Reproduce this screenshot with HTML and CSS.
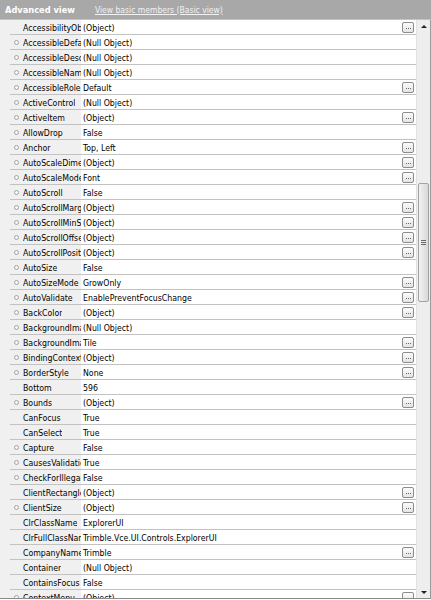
FILE: index.html
```html
<!DOCTYPE html>
<html>
<head>
<meta charset="utf-8">
<link rel="stylesheet" href="styles.css">
</head>
<body>
<div class="panel">
  <div class="header">
    <span class="title">Advanced view</span>
    <span class="link">View basic members (Basic view)</span>
  </div>
  <div class="main">
    <div class="grid">
      <div class="row"><div class="gutter"></div><div class="cells"><div class="name"><span class="mark"></span><span class="ntext">AccessibilityObject</span></div><div class="value"><span class="vtext">(Object)</span><span class="btn"></span></div></div></div>
      <div class="row"><div class="gutter"></div><div class="cells"><div class="name"><span class="mark"><i class="dot"></i></span><span class="ntext">AccessibleDefaultActionDescription</span></div><div class="value"><span class="vtext">(Null Object)</span></div></div></div>
      <div class="row"><div class="gutter"></div><div class="cells"><div class="name"><span class="mark"><i class="dot"></i></span><span class="ntext">AccessibleDescription</span></div><div class="value"><span class="vtext">(Null Object)</span></div></div></div>
      <div class="row"><div class="gutter"></div><div class="cells"><div class="name"><span class="mark"><i class="dot"></i></span><span class="ntext">AccessibleName</span></div><div class="value"><span class="vtext">(Null Object)</span></div></div></div>
      <div class="row"><div class="gutter"></div><div class="cells"><div class="name"><span class="mark"><i class="dot"></i></span><span class="ntext">AccessibleRole</span></div><div class="value"><span class="vtext">Default</span><span class="btn"></span></div></div></div>
      <div class="row"><div class="gutter"></div><div class="cells"><div class="name"><span class="mark"><i class="dot"></i></span><span class="ntext">ActiveControl</span></div><div class="value"><span class="vtext">(Null Object)</span></div></div></div>
      <div class="row"><div class="gutter"></div><div class="cells"><div class="name"><span class="mark"><i class="dot"></i></span><span class="ntext">ActiveItem</span></div><div class="value"><span class="vtext">(Object)</span><span class="btn"></span></div></div></div>
      <div class="row"><div class="gutter"></div><div class="cells"><div class="name"><span class="mark"><i class="dot"></i></span><span class="ntext">AllowDrop</span></div><div class="value"><span class="vtext">False</span></div></div></div>
      <div class="row"><div class="gutter"></div><div class="cells"><div class="name"><span class="mark"><i class="dot"></i></span><span class="ntext">Anchor</span></div><div class="value"><span class="vtext">Top, Left</span><span class="btn"></span></div></div></div>
      <div class="row"><div class="gutter"></div><div class="cells"><div class="name"><span class="mark"><i class="dot"></i></span><span class="ntext">AutoScaleDimensions</span></div><div class="value"><span class="vtext">(Object)</span><span class="btn"></span></div></div></div>
      <div class="row"><div class="gutter"></div><div class="cells"><div class="name"><span class="mark"><i class="dot"></i></span><span class="ntext">AutoScaleMode</span></div><div class="value"><span class="vtext">Font</span><span class="btn"></span></div></div></div>
      <div class="row"><div class="gutter"></div><div class="cells"><div class="name"><span class="mark"><i class="dot"></i></span><span class="ntext">AutoScroll</span></div><div class="value"><span class="vtext">False</span></div></div></div>
      <div class="row"><div class="gutter"></div><div class="cells"><div class="name"><span class="mark"><i class="dot"></i></span><span class="ntext">AutoScrollMargin</span></div><div class="value"><span class="vtext">(Object)</span><span class="btn"></span></div></div></div>
      <div class="row"><div class="gutter"></div><div class="cells"><div class="name"><span class="mark"><i class="dot"></i></span><span class="ntext">AutoScrollMinSize</span></div><div class="value"><span class="vtext">(Object)</span><span class="btn"></span></div></div></div>
      <div class="row"><div class="gutter"></div><div class="cells"><div class="name"><span class="mark"><i class="dot"></i></span><span class="ntext">AutoScrollOffset</span></div><div class="value"><span class="vtext">(Object)</span><span class="btn"></span></div></div></div>
      <div class="row"><div class="gutter"></div><div class="cells"><div class="name"><span class="mark"><i class="dot"></i></span><span class="ntext">AutoScrollPosition</span></div><div class="value"><span class="vtext">(Object)</span><span class="btn"></span></div></div></div>
      <div class="row"><div class="gutter"></div><div class="cells"><div class="name"><span class="mark"><i class="dot"></i></span><span class="ntext">AutoSize</span></div><div class="value"><span class="vtext">False</span></div></div></div>
      <div class="row"><div class="gutter"></div><div class="cells"><div class="name"><span class="mark"><i class="dot"></i></span><span class="ntext">AutoSizeMode</span></div><div class="value"><span class="vtext">GrowOnly</span><span class="btn"></span></div></div></div>
      <div class="row"><div class="gutter"></div><div class="cells"><div class="name"><span class="mark"><i class="dot"></i></span><span class="ntext">AutoValidate</span></div><div class="value"><span class="vtext">EnablePreventFocusChange</span><span class="btn"></span></div></div></div>
      <div class="row"><div class="gutter"></div><div class="cells"><div class="name"><span class="mark"><i class="dot"></i></span><span class="ntext">BackColor</span></div><div class="value"><span class="vtext">(Object)</span><span class="btn"></span></div></div></div>
      <div class="row"><div class="gutter"></div><div class="cells"><div class="name"><span class="mark"><i class="dot"></i></span><span class="ntext">BackgroundImage</span></div><div class="value"><span class="vtext">(Null Object)</span></div></div></div>
      <div class="row"><div class="gutter"></div><div class="cells"><div class="name"><span class="mark"><i class="dot"></i></span><span class="ntext">BackgroundImageLayout</span></div><div class="value"><span class="vtext">Tile</span><span class="btn"></span></div></div></div>
      <div class="row"><div class="gutter"></div><div class="cells"><div class="name"><span class="mark"><i class="dot"></i></span><span class="ntext">BindingContext</span></div><div class="value"><span class="vtext">(Object)</span><span class="btn"></span></div></div></div>
      <div class="row"><div class="gutter"></div><div class="cells"><div class="name"><span class="mark"><i class="dot"></i></span><span class="ntext">BorderStyle</span></div><div class="value"><span class="vtext">None</span><span class="btn"></span></div></div></div>
      <div class="row"><div class="gutter"></div><div class="cells"><div class="name"><span class="mark"></span><span class="ntext">Bottom</span></div><div class="value"><span class="vtext">596</span></div></div></div>
      <div class="row"><div class="gutter"></div><div class="cells"><div class="name"><span class="mark"><i class="dot"></i></span><span class="ntext">Bounds</span></div><div class="value"><span class="vtext">(Object)</span><span class="btn"></span></div></div></div>
      <div class="row"><div class="gutter"></div><div class="cells"><div class="name"><span class="mark"></span><span class="ntext">CanFocus</span></div><div class="value"><span class="vtext">True</span></div></div></div>
      <div class="row"><div class="gutter"></div><div class="cells"><div class="name"><span class="mark"></span><span class="ntext">CanSelect</span></div><div class="value"><span class="vtext">True</span></div></div></div>
      <div class="row"><div class="gutter"></div><div class="cells"><div class="name"><span class="mark"><i class="dot"></i></span><span class="ntext">Capture</span></div><div class="value"><span class="vtext">False</span></div></div></div>
      <div class="row"><div class="gutter"></div><div class="cells"><div class="name"><span class="mark"><i class="dot"></i></span><span class="ntext">CausesValidation</span></div><div class="value"><span class="vtext">True</span></div></div></div>
      <div class="row"><div class="gutter"></div><div class="cells"><div class="name"><span class="mark"><i class="dot"></i></span><span class="ntext">CheckForIllegalCrossThreadCalls</span></div><div class="value"><span class="vtext">False</span></div></div></div>
      <div class="row"><div class="gutter"></div><div class="cells"><div class="name"><span class="mark"></span><span class="ntext">ClientRectangle</span></div><div class="value"><span class="vtext">(Object)</span><span class="btn"></span></div></div></div>
      <div class="row"><div class="gutter"></div><div class="cells"><div class="name"><span class="mark"><i class="dot"></i></span><span class="ntext">ClientSize</span></div><div class="value"><span class="vtext">(Object)</span><span class="btn"></span></div></div></div>
      <div class="row"><div class="gutter"></div><div class="cells"><div class="name"><span class="mark"></span><span class="ntext">ClrClassName</span></div><div class="value"><span class="vtext">ExplorerUI</span></div></div></div>
      <div class="row"><div class="gutter"></div><div class="cells"><div class="name"><span class="mark"></span><span class="ntext">ClrFullClassName</span></div><div class="value"><span class="vtext">Trimble.Vce.UI.Controls.ExplorerUI</span></div></div></div>
      <div class="row"><div class="gutter"></div><div class="cells"><div class="name"><span class="mark"></span><span class="ntext">CompanyName</span></div><div class="value"><span class="vtext">Trimble</span><span class="btn"></span></div></div></div>
      <div class="row"><div class="gutter"></div><div class="cells"><div class="name"><span class="mark"></span><span class="ntext">Container</span></div><div class="value"><span class="vtext">(Null Object)</span></div></div></div>
      <div class="row"><div class="gutter"></div><div class="cells"><div class="name"><span class="mark"></span><span class="ntext">ContainsFocus</span></div><div class="value"><span class="vtext">False</span></div></div></div>
      <div class="row"><div class="gutter"></div><div class="cells"><div class="name"><span class="mark"><i class="dot"></i></span><span class="ntext">ContextMenu</span></div><div class="value"><span class="vtext">(Object)</span><span class="btn"></span></div></div></div>
    </div>
    <div class="scrollbar">
      <div class="arrow up"></div>
      <div class="track">
        <div class="thumb"><span class="grip"></span></div>
      </div>
      <div class="arrow down"></div>
    </div>
  </div>
</div>
</body>
</html>
```
FILE: styles.css
```css
html, body {
  margin: 0;
  padding: 0;
  background: #ffffff;
}
body {
  width: 431px;
  height: 600px;
  overflow: hidden;
  font-family: "DejaVu Sans Condensed", "Liberation Sans", sans-serif;
  font-size: 8.7px;
  color: #000000;
}
.panel {
  display: flex;
  flex-direction: column;
  height: 600px;
}
.header {
  height: 19px;
  flex: 0 0 19px;
  background: #a8a8a8;
  border-bottom: 1px solid #c4c4c4;
  display: flex;
  align-items: center;
  padding-left: 5px;
  gap: 20px;
}
.title {
  font-weight: bold;
  font-size: 9.2px;
  color: #ffffff;
}
.link {
  color: #f2f2f2;
  text-decoration: underline;
  font-size: 8.5px;
}
.main {
  flex: 0 0 579px;
  height: 579px;
  display: flex;
  border-bottom: 1px solid #8a8a8a;
  border-right: 1px solid #9a9a9a;
  box-sizing: border-box;
  overflow: hidden;
}
.grid {
  flex: 1;
  overflow: hidden;
  background: #f0f0f0;
}
.row {
  display: flex;
  height: 15px;
}
.gutter {
  width: 10px;
  flex: 0 0 10px;
  background: #f0f0f0;
}
.cells {
  flex: 1;
  display: flex;
  border-bottom: 1px solid #c2c2c2;
  height: 15px;
  box-sizing: border-box;
  padding-top: 1px;
}
.name {
  width: 71px;
  flex: 0 0 71px;
  display: flex;
  align-items: center;
  overflow: hidden;
  background: #f0f0f0;
  white-space: nowrap;
}
.mark {
  width: 13px;
  flex: 0 0 13px;
  display: flex;
  align-items: center;
  justify-content: center;
}
.dot {
  display: block;
  width: 3px;
  height: 3px;
  border: 1px solid #a3a3a3;
  border-radius: 50%;
  background: #f8f8f8;
}
.ntext {
  overflow: hidden;
  min-width: 0;
}
.value {
  flex: 1;
  display: flex;
  align-items: center;
  background: #ffffff;
  padding-left: 2px;
  padding-right: 2px;
  white-space: nowrap;
  margin-top: -1px;
  padding-top: 1px;
}
.vtext {
  flex: 1;
}
.btn {
  width: 10px;
  height: 9px;
  border: 1px solid #8c8c8c;
  border-radius: 2px;
  background: linear-gradient(#fbfbfb, #e4e4e4);
  display: flex;
  align-items: center;
  justify-content: center;
}
.btn::before {
  content: "";
  width: 1px;
  height: 1px;
  background: #6a6a6a;
  box-shadow: -2px 0 0 #6a6a6a, 2px 0 0 #6a6a6a;
  margin-top: 1px;
}
.scrollbar {
  width: 13px;
  flex: 0 0 13px;
  background: #eeeeee;
  border-left: 1px solid #e2e2e2;
  display: flex;
  flex-direction: column;
  align-items: center;
}
.arrow {
  height: 12px;
  flex: 0 0 12px;
  width: 13px;
  display: flex;
  align-items: center;
  justify-content: center;
}
.arrow::after {
  content: "";
  width: 0;
  height: 0;
  border-left: 3px solid transparent;
  border-right: 3px solid transparent;
}
.up::after {
  border-bottom: 3px solid #222222;
}
.down::after {
  border-top: 3px solid #222222;
}
.track {
  flex: 1;
  width: 13px;
  padding-top: 151px;
  box-sizing: border-box;
}
.thumb {
  width: 11px;
  height: 119px;
  margin-left: 1px;
  border: 1px solid #a2a2a2;
  border-radius: 2px;
  box-sizing: border-box;
  background: linear-gradient(90deg, #f2f2f2, #e2e2e2 60%, #d8d8d8);
  display: flex;
  align-items: center;
  justify-content: center;
}
.grip {
  width: 5px;
  height: 5px;
  background: repeating-linear-gradient(#6a6a6a 0 1px, transparent 1px 2px);
}
```
